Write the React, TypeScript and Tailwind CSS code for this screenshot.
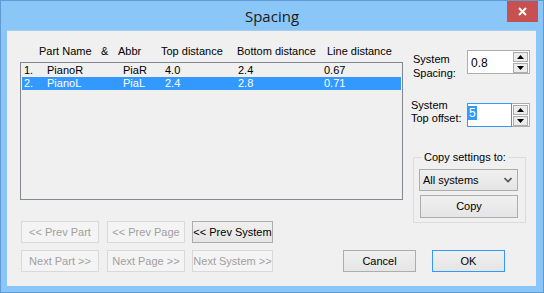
import React from 'react';

const btnBase = 'flex items-center justify-center h-[22px] text-[11px] leading-none border';
const btnOn = `${btnBase} border-[#adadad] bg-gradient-to-b from-[#f0f0f0] to-[#e5e5e5] text-black`;
const btnOff = `${btnBase} border-[#d9d9d9] bg-[#f4f4f4] text-[#a0a0a0]`;

function SpinArrows() {
  return (
    <div className="flex flex-col gap-[1px] pr-[1px] pt-[1px]">
      <div className="w-[15px] h-[10px] border border-[#acacac] bg-[#ececec] flex items-center justify-center">
        <svg width="7" height="4" viewBox="0 0 7 4"><path d="M3.5 0 L7 4 L0 4 Z" fill="#000" /></svg>
      </div>
      <div className="w-[15px] h-[10px] border border-[#acacac] bg-[#ececec] flex items-center justify-center">
        <svg width="7" height="4" viewBox="0 0 7 4"><path d="M0 0 L7 0 L3.5 4 Z" fill="#000" /></svg>
      </div>
    </div>
  );
}

const rows = [
  { n: '1.', name: 'PianoR', abbr: 'PiaR', top: '4.0', bottom: '2.4', line: '0.67' },
  { n: '2.', name: 'PianoL', abbr: 'PiaL', top: '2.4', bottom: '2.8', line: '0.71' },
];

export default function App() {
  return (
    <div className="w-[544px] h-[293px] bg-[#8bc6f8] border border-[#5f9bd2] flex flex-col" style={{ fontFamily: '"Liberation Sans", Arial, sans-serif' }}>
      {/* title bar */}
      <div className="h-[29px] flex items-start relative">
        <div className="flex-1 text-center pt-[4px] text-[15px] text-[#1a1a1a]" style={{ fontFamily: '"Open Sans", "Noto Sans", sans-serif' }}>
          Spacing
        </div>
        <div className="absolute right-[5px] top-0 w-[31px] h-[21px] bg-[#c75050] flex items-center justify-center">
          <svg width="9" height="9" viewBox="0 0 9 9"><path d="M1 1 L8 8 M8 1 L1 8" stroke="#fff" strokeWidth="2" /></svg>
        </div>
      </div>

      {/* client */}
      <div className="ml-[6px] w-[529px] h-[256px] bg-[#f0f0f0] border-t border-[#a9cdec] flex flex-col pl-[13px] pt-[13px] text-[11px] text-black">
        <div className="flex">
          {/* left column */}
          <div className="w-[383px] flex flex-col">
            <div className="h-[14px] leading-[14px] flex pl-[19px] whitespace-nowrap">
              <span className="w-[62px]">Part Name</span>
              <span className="w-[17px]">&amp;</span>
              <span className="w-[43px]">Abbr</span>
              <span className="w-[76px]">Top distance</span>
              <span className="w-[90px]">Bottom distance</span>
              <span>Line distance</span>
            </div>
            <div className="mt-[4px] h-[138px] border border-[#828790] bg-[#f0f0f0] pt-[1px] pl-[1px]">
              {rows.map((r, i) => (
                <div key={r.n} className={`h-[13px] leading-[13px] flex pl-[2px] w-[379px] ${i === 1 ? 'bg-[#3399ff] text-white' : ''}`}>
                  <span className="w-[23px]">{r.n}</span>
                  <span className="w-[76px]">{r.name}</span>
                  <span className="w-[42px]">{r.abbr}</span>
                  <span className="w-[73px]">{r.top}</span>
                  <span className="w-[86px]">{r.bottom}</span>
                  <span>{r.line}</span>
                </div>
              ))}
            </div>
            <div className="mt-[21px] flex ml-[1px]">
              <div className={`${btnOff} w-[78px]`}>&lt;&lt; Prev Part</div>
              <div className={`${btnOff} w-[78px] ml-[8px]`}>&lt;&lt; Prev Page</div>
              <div className={`${btnOn} w-[81px] ml-[7px]`}>&lt;&lt; Prev System</div>
            </div>
          </div>

          {/* right column */}
          <div className="ml-[10px] flex flex-col">
            <div className="mt-[6px] h-[24px] flex items-start">
              <div className="w-[54px] mt-[2px] leading-[14px]">System<br />Spacing:</div>
              <div className="w-[63px] h-[24px] border border-[#abadb3] bg-white flex justify-between">
                <span className="pl-[3px] pt-[3px] text-[12px]">0.8</span>
                <SpinArrows />
              </div>
            </div>
            <div className="mt-[29px] h-[24px] flex items-start">
              <div className="w-[54px] -mt-[4px] -ml-[2px] mr-[2px] leading-[13px]">System<br />Top offset:</div>
              <div className="w-[63px] h-[24px] flex">
                <div className="w-[45px] h-[24px] border border-[#3399ff] bg-white pt-[1px]">
                  <span className="inline-block bg-[#3399ff] text-white text-[12px] leading-[14px] px-[1px]">5</span>
                </div>
                <div className="flex-1 h-[24px] border border-l-0 border-[#abadb3] bg-white flex justify-end">
                  <SpinArrows />
                </div>
              </div>
            </div>

            <div className="relative mt-[30px] w-[113px] h-[66px] border border-[#dcdcdc] pl-[5px] pt-[11px]">
              <span className="absolute -top-[8px] left-[8px] bg-[#f0f0f0] px-[2px] leading-[14px]">Copy settings to:</span>
              <div className="w-[99px] h-[22px] border border-[#acacac] bg-gradient-to-b from-[#f0f0f0] to-[#e5e5e5] flex items-center justify-between pl-[3px] pr-[5px]">
                <span>All systems</span>
                <svg width="8" height="6" viewBox="0 0 8 6"><path d="M0.5 1 L4 4.5 L7.5 1" stroke="#555" strokeWidth="1.6" fill="none" /></svg>
              </div>
              <div className={`${btnOn} w-[98px] h-[23px] mt-[4px] ml-[1px]`}>Copy</div>
            </div>
          </div>
        </div>

        {/* bottom row */}
        <div className="mt-[7px] flex ml-[1px]">
          <div className={`${btnOff} w-[78px]`}>Next Part &gt;&gt;</div>
          <div className={`${btnOff} w-[78px] ml-[8px]`}>Next Page &gt;&gt;</div>
          <div className={`${btnOff} w-[81px] ml-[7px]`}>Next System &gt;&gt;</div>
          <div className={`${btnOn} w-[73px] ml-[70px]`}>Cancel</div>
          <div className={`${btnOn} w-[73px] ml-[16px] !border-[#3399ff]`}>OK</div>
        </div>
      </div>
    </div>
  );
}
